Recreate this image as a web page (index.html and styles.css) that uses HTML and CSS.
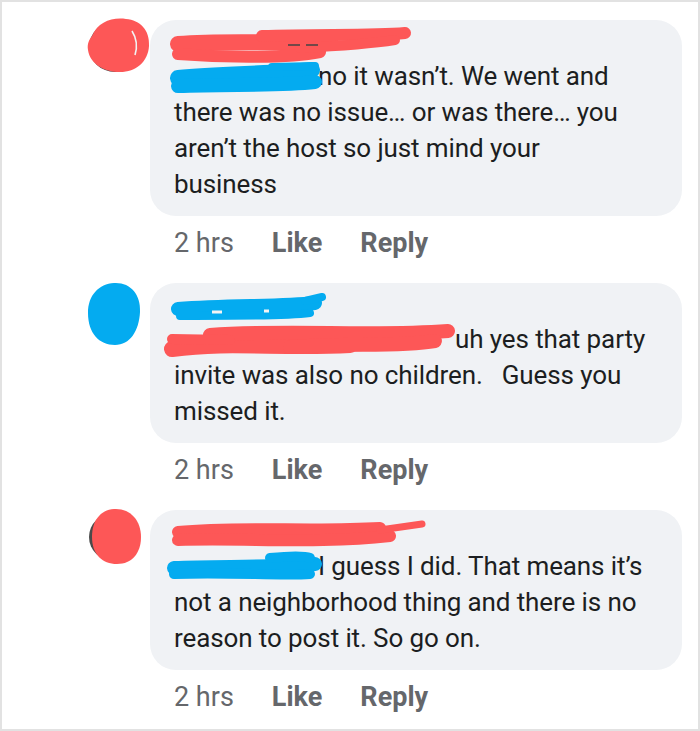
FILE: index.html
```html
<!DOCTYPE html>
<html lang="en">
<head>
  <meta charset="UTF-8" />
  <title>Comments</title>
  <link rel="stylesheet" href="styles.css">
</head>
<body>
  <div class="frame">

    <div class="comment">
      <div class="avatar">
        <svg width="66" height="70" viewBox="0 0 66 70">
          <ellipse cx="29" cy="31" rx="26" ry="25" fill="#4a4a4a"/>
          <path d="M6 20 C12 6 26 1 40 3 C54 4 64 14 63 30 C62 46 50 56 34 56 C18 56 4 48 2 34 C1 28 3 24 6 20 Z" fill="#fd5757"/>
          <path d="M46 15 Q53 26 49 39" stroke="#f2f2f2" stroke-width="1.6" fill="none"/>
        </svg>
      </div>
      <div class="body">
        <div class="bubble">
          <svg class="scribble" width="300" height="90" viewBox="0 0 300 90">
            <path d="M28 24 C80 20 130 24 180 22" stroke="#fd5757" stroke-width="16" stroke-linecap="round" fill="none"/>
            <path d="M28 34 C80 38 140 38 170 32" stroke="#fd5757" stroke-width="12" stroke-linecap="round" fill="none"/>
            <path d="M112 16 C170 14 220 16 255 13" stroke="#fd5757" stroke-width="12" stroke-linecap="round" fill="none"/>
            <path d="M150 28 C190 26 220 24 245 20" stroke="#fd5757" stroke-width="10" stroke-linecap="round" fill="none"/>
            <path d="M138 25 L150 25 M156 25 L168 25" stroke="#444" stroke-width="1.5" fill="none"/>
            <path d="M28 58 C70 54 120 54 162 50" stroke="#04abf0" stroke-width="16" stroke-linecap="round" fill="none"/>
            <path d="M28 66 C80 64 130 66 165 62" stroke="#04abf0" stroke-width="14" stroke-linecap="round" fill="none"/>
            <path d="M122 47 L165 46" stroke="#04abf0" stroke-width="8" stroke-linecap="round" fill="none"/>
          </svg>
          <div class="author"></div>
          <p class="text"><span class="tag"></span>no it wasn’t. We went and<br>there was no issue… or was there… you<br>aren’t the host so just mind your<br>business</p>
        </div>
        <div class="meta"><span class="time">2 hrs</span><span class="action">Like</span><span class="action">Reply</span></div>
      </div>
    </div>

    <div class="comment">
      <div class="avatar">
        <svg width="66" height="70" viewBox="0 0 66 70">
          <path d="M28 4 C44 3 55 15 54 33 C53 52 44 66 29 66 C13 66 2 54 2 34 C2 16 13 5 28 4 Z" fill="#04abf0"/>
        </svg>
      </div>
      <div class="body">
        <div class="bubble">
          <svg class="scribble" width="320" height="90" viewBox="0 0 320 90">
            <path d="M28 26 C80 22 130 24 165 20" stroke="#04abf0" stroke-width="14" stroke-linecap="round" fill="none"/>
            <path d="M30 33 C80 32 130 34 160 30" stroke="#04abf0" stroke-width="8" stroke-linecap="round" fill="none"/>
            <path d="M155 18 L172 14" stroke="#04abf0" stroke-width="8" stroke-linecap="round" fill="none"/>
            <path d="M62 29 L72 29 M114 28 L119 28" stroke="#f4f4f4" stroke-width="3" fill="none"/>
            <path d="M22 66 C80 58 130 66 200 62" stroke="#fd5757" stroke-width="16" stroke-linecap="round" fill="none"/>
            <path d="M60 52 C140 46 220 54 298 48" stroke="#fd5757" stroke-width="14" stroke-linecap="round" fill="none"/>
            <path d="M140 64 C200 60 250 64 285 58" stroke="#fd5757" stroke-width="14" stroke-linecap="round" fill="none"/>
            <path d="M22 56 L80 57" stroke="#fd5757" stroke-width="10" stroke-linecap="round" fill="none"/>
          </svg>
          <div class="author"></div>
          <p class="text"><span class="tag wide"></span>uh yes that party<br>invite was also no children. &nbsp; Guess you<br>missed it.</p>
        </div>
        <div class="meta"><span class="time">2 hrs</span><span class="action">Like</span><span class="action">Reply</span></div>
      </div>
    </div>

    <div class="comment">
      <div class="avatar">
        <svg width="66" height="70" viewBox="0 0 66 70">
          <ellipse cx="28" cy="31" rx="25" ry="24" fill="#4a4a4a"/>
          <path d="M28 3 C44 2 55 14 55 31 C55 47 46 58 31 58 C16 58 6 48 6 31 C6 15 14 4 28 3 Z" fill="#fd5757"/>
        </svg>
      </div>
      <div class="body">
        <div class="bubble">
          <svg class="scribble" width="300" height="90" viewBox="0 0 300 90">
            <path d="M28 22 C90 16 160 22 230 18" stroke="#fd5757" stroke-width="12" stroke-linecap="round" fill="none"/>
            <path d="M28 30 C100 28 170 34 240 26" stroke="#fd5757" stroke-width="12" stroke-linecap="round" fill="none"/>
            <path d="M230 20 L272 14" stroke="#fd5757" stroke-width="7" stroke-linecap="round" fill="none"/>
            <path d="M24 58 C70 56 120 58 165 54" stroke="#04abf0" stroke-width="14" stroke-linecap="round" fill="none"/>
            <path d="M24 64 C80 62 130 66 160 64" stroke="#04abf0" stroke-width="10" stroke-linecap="round" fill="none"/>
            <path d="M120 48 C140 46 155 46 160 48" stroke="#04abf0" stroke-width="10" stroke-linecap="round" fill="none"/>
          </svg>
          <div class="author"></div>
          <p class="text"><span class="tag"></span>I guess I did. That means it’s<br>not a neighborhood thing and there is no<br>reason to post it. So go on.</p>
        </div>
        <div class="meta"><span class="time">2 hrs</span><span class="action">Like</span><span class="action">Reply</span></div>
      </div>
    </div>

  </div>
</body>
</html>
```
FILE: styles.css
```css
body {
  margin: 0;
  padding: 0;
  background: #fff;
  font-family: Roboto, "Liberation Sans", sans-serif;
  color: #1c1e21;
}
.frame {
  width: 700px;
  height: 731px;
  box-sizing: border-box;
  border: 2px solid #e2e2e2;
  padding: 18px 16px 0 84px;
}
.comment {
  display: flex;
  margin-bottom: 23px;
}
.avatar {
  width: 64px;
  flex: none;
  margin-top: -4px;
}
.body {
  flex: 1;
}
.bubble {
  position: relative;
  background: #f0f2f5;
  border-radius: 26px;
  padding: 12px 24px 14px 24px;
}
.scribble {
  position: absolute;
  left: 0;
  top: 0;
}
.author {
  height: 26px;
}
.text {
  margin: 0;
  font-size: 26px;
  letter-spacing: -0.1px;
  line-height: 36px;
}
.tag {
  display: inline-block;
  width: 144px;
}
.tag.wide {
  width: 281px;
}
.meta {
  display: flex;
  gap: 38px;
  padding: 10px 0 0 24px;
  font-size: 27px;
  line-height: 34px;
  color: #65676b;
}
.action {
  font-weight: bold;
}
```
